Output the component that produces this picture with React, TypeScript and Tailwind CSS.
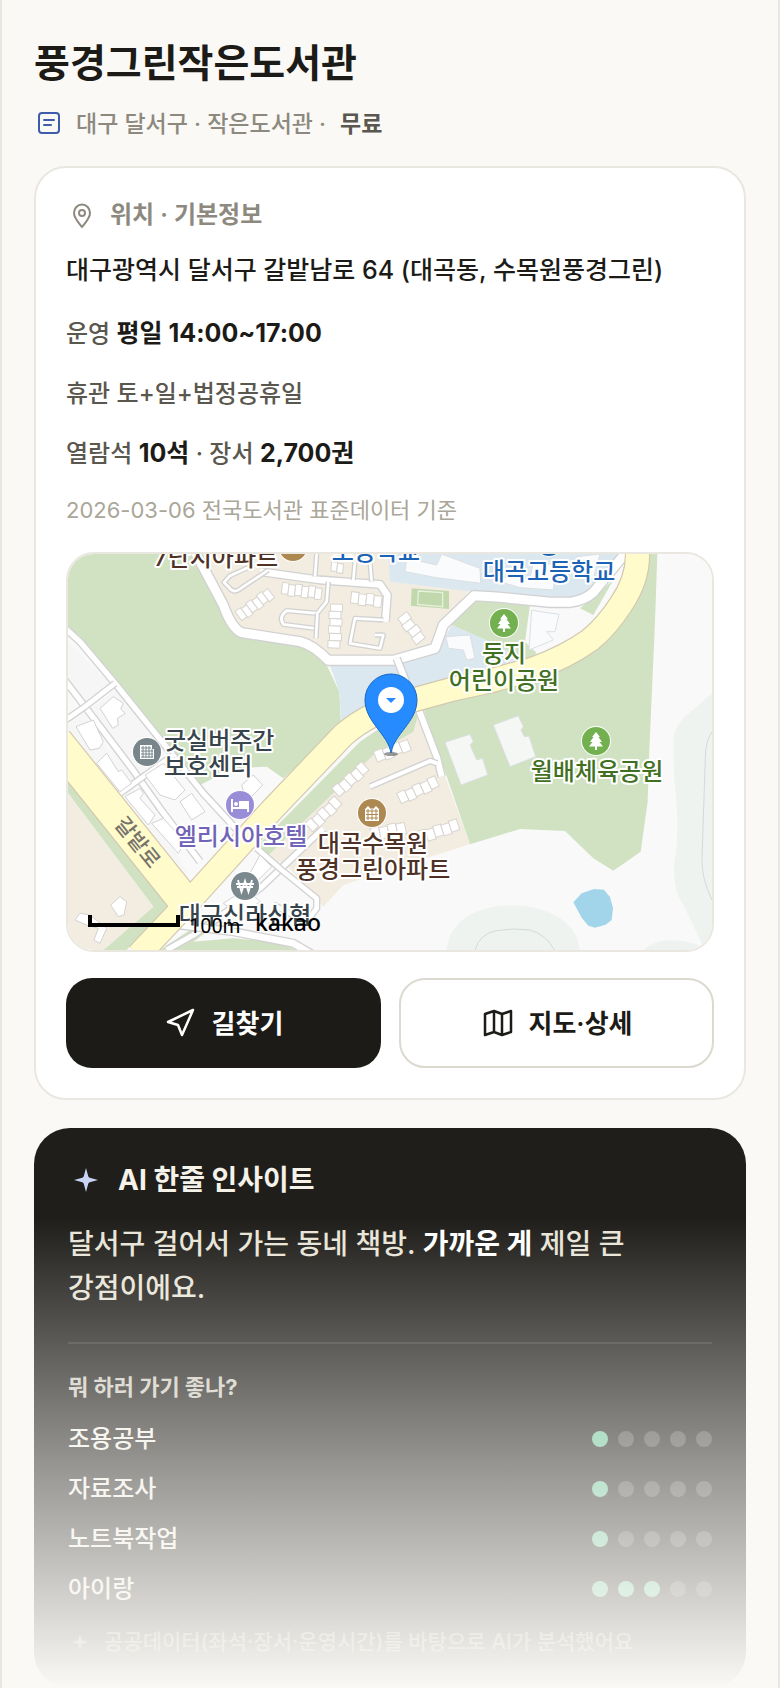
import type { ReactNode } from "react";
import { clsx } from "clsx";

const ROAD = "#d2d2d2";

/** White street with a thin grey casing. */
function Street({ d, width = 12 }: { d: string; width?: number }) {
  return (
    <g fill="none" strokeLinejoin="round">
      <path d={d} stroke={ROAD} strokeWidth={width + 8} />
      <path d={d} stroke="#fff" strokeWidth={width} />
    </g>
  );
}

/** Row of joined apartment units, drawn from its first corner along an angle. */
function Units({ x, y, angle, count, w = 20, h = 34 }: { x: number; y: number; angle: number; count: number; w?: number; h?: number }) {
  return (
    <g transform={`translate(${x} ${y}) rotate(${angle})`} fill="#fff" stroke="#d8d4cf" strokeWidth="3">
      {Array.from({ length: count }, (_, i) => (
        <rect key={i} x={i * w} y={i % 2 ? 4 : 0} width={w} height={h} />
      ))}
    </g>
  );
}

function MapLabel({ x, y, color, anchor = "middle", children }: { x: number; y: number; color: string; anchor?: "middle" | "start"; children: ReactNode }) {
  return (
    <text x={x} y={y} fill={color} textAnchor={anchor} stroke="#fff" strokeWidth="4" strokeLinejoin="round" paintOrder="stroke">
      {children}
    </text>
  );
}

function Poi({ x, y, color, children }: { x: number; y: number; color: string; children?: ReactNode }) {
  return (
    <g transform={`translate(${x} ${y})`}>
      <circle r="15" fill="#fff" />
      <circle r="14" fill={color} />
      {children}
    </g>
  );
}

function Tree() {
  return <path d="M0-9 4-4H2.500L6 1H3.500L7 5.500H1V9H-1V5.500H-7L-3.500 1H-6L-2.500-4H-4Z" fill="#fff" />;
}

function Building() {
  return (
    <g>
      <path d="M-7-7H5V-3H7V7H-7Z" fill="#fff" />
      <path d="M-6-4H4M-6-1H6M-6 2H6M-6 5H6M-4-6V6M-1-6V6M2-6V6M5-3V6" stroke="#78868c" />
    </g>
  );
}

function Apartment() {
  return (
    <g>
      <path d="M-7 8V-4L-4-7-1-4 0-5 1-4 4-7 7-4V8Z" fill="#fff" />
      <path d="M-6-2H6M-6 1.500H6M-6 5H6M-4-4V7M0-4V7M4-4V7" stroke="#ad8850" />
    </g>
  );
}

function LocationMap() {
  return (
    <svg viewBox="0 0 644 396" preserveAspectRatio="xMidYMid slice" className="block size-full" role="img" aria-label="풍경그린작은도서관 위치 지도">
      <rect width="644" height="396" fill="#f9f9f9" />
      <g transform="translate(-8 -9) scale(0.33333)">
        {/* ground */}
        <path d="M24 27H410L490 200 530 260 720 295 800 360 838 440 843 540 760 620 670 700 620 665 520 670 420 720 300 590 160 400 24 245Z" fill="#d0e2c2" />
        <path d="M410 27H990V110L1230 135 1140 240 1110 300 1000 330H800L720 285 530 255 500 220Z" fill="#f3ede1" />
        <path d="M985 27H1700L1600 160H1500L1240 140 990 110Z" fill="#dbe8f0" />
        <path d="M810 362H1000L1130 320 1175 240 1290 290 1430 320 1300 370 1060 440 915 500 845 540 838 440Z" fill="#dbe8f0" />
        <path d="M1175 240 1240 165 1410 180 1395 290 1430 325 1400 345 1290 290Z" fill="#d0e2c2" />
        <path d="M1560 190 1660 105 1600 210Z" fill="#d0e2c2" />
        <path d="M1090 490 1200 450 1480 375 1560 335 1640 260 1710 170 1760 60 1770 27H1792L1785 230 1768 615 1763 770 1742 920 1660 977 1600 940 1515 858 1380 852 1230 898Z" fill="#d0e2c2" />
        <path d="M1060 480 1085 545 940 640 620 945 585 910 900 590Z" fill="#d0e2c2" />
        <path d="M1080 490 1230 898 1110 935 850 1020 790 1085 680 960 620 935 940 630 1060 560Z" fill="#f3ede1" />
        <path d="M24 700 325 1085 200 1215H130L280 1085 24 745Z" fill="#d0e2c2" />
        <path d="M24 745 280 1085 130 1215H24Z" fill="#f3ede1" />
        <path d="M300 1215 390 1155 480 1130 400 1190 520 1180 640 1190 710 1215Z" fill="#d0e2c2" />

        {/* contours and pond */}
        <path d="M1956 445 1870 520Q1840 550 1840 590L1842 700Q1862 850 1842 960 1840 1040 1870 1080L1928 1200 1956 1215Z" fill="#eef3f0" />
        <path d="M1160 1215C1170 1120 1260 1082 1355 1081 1460 1082 1555 1130 1559 1215ZM1750 1215Q1810 1160 1930 1205V1215Z" fill="#eef3f0" />
        <path d="M1956 560Q1936 590 1936 640L1926 940Q1924 1000 1956 1065M1245 1215Q1260 1165 1310 1157 1360 1148 1410 1155 1460 1170 1483 1215" fill="none" stroke="#d3dad5" strokeWidth="3" />
        <path d="M1540 1072 1565 1045 1602 1032 1632 1034 1650 1056 1659 1090 1655 1125 1637 1139 1605 1148 1585 1142 1565 1118Z" fill="#a3d5ea" />

        {/* residential blocks on the west side */}
        <path d="M24 290 150 415 75 470 24 420ZM95 490 165 435 320 620 200 720ZM24 540 70 505 350 925 390 1000 24 600Z" fill="#f6f6f7" />
        <Street d="M10 245 60 290 165 415 330 620 430 745 545 870" width={16} />
        <Street d="M10 400 75 485 215 670 300 790 420 950" width={16} />
        <Street d="M10 530 75 485 165 415" width={14} />
        <Street d="M180 745 340 630" width={14} />
        <g fill="#fff" stroke="#d2d2d2" strokeWidth="3">
          <path d="M120 490 160 455 190 475 182 492 196 505 172 520 175 540 158 550Z" />
          <path d="M48 545 100 525 130 590 118 610 90 615Z" />
          <path d="M110 655 140 625 175 680 185 675 215 715 180 740Z" />
          <path d="M255 690 310 655 375 735 345 765 300 750Z" />
          <path d="M360 770 395 745 435 800 395 825Z" />
          <path d="M195 755 240 730 250 745 240 760 285 810 265 840Z" />
          <path d="M275 835 310 820 375 890 355 925Z" />
          <path d="M545 720 580 690 608 720 560 770Z" />
          <path d="M152 1080 180 1055 200 1070 192 1110 175 1115Z" />
          <path d="M45 1125 60 1105 90 1110 140 1150 120 1195 102 1185 115 1150 80 1140Z" />
        </g>

        {/* apartment complex streets */}
        <Street d="M600 80 780 105 960 118 982 150 976 230" width={20} />
        <Street d="M770 27 765 95M885 50 880 105M930 50 935 110" width={8} />
        <Street d="M625 75 535 135Q520 145 505 125L492 112 510 92 570 65" width={8} />
        <Street d="M805 110 800 170 772 205 680 197Q655 215 670 238L765 250" width={8} />
        <Street d="M772 205 768 280M970 225 885 220 870 295 960 310 970 270 945 270" width={8} />
        <Units x={525} y={200} angle={-37} count={6} />
        <Units x={668} y={112} angle={7} count={6} />
        <Units x={875} y={140} angle={6} count={4} w={23} />
        <Units x={848} y={178} angle={92} count={6} w={22} h={36} />
        <Units x={1040} y={200} angle={52} count={4} w={24} />
        <Units x={815} y={50} angle={5} count={2} w={18} h={28} />
        <path d="M1055 130 1167 138V192L1053 182Z" fill="#c1d8ac" />
        <path d="M1075 138 1148 143V185L1073 178Z" fill="none" stroke="#e6f0dc" strokeWidth="4" />
        <g fill="#fafbfc" stroke="#dcdfe2" strokeWidth="3">
          <path d="M1040 40 1130 60 1145 27 1260 70 1262 115 1130 98 1035 80Z" />
          <path d="M1270 95 1410 100 1420 50 1490 60 1480 135 1380 128Z" />
          <path d="M1550 35 1620 27 1600 100 1560 105Z" />
          <path d="M1158 275 1230 270 1245 340 1220 345 1210 315 1165 310Z" />
          <path d="M1415 195 1440 200 1497 208 1485 260 1460 260 1480 285 1407 315Z" />
          <path d="M1300 540 1375 512 1390 545 1383 555 1393 575 1407 573 1427 635 1350 665Z" fill="#f4f7f3" />
          <path d="M1155 592 1230 568 1240 590 1230 600 1250 645 1268 640 1283 690 1203 720Z" fill="#f4f7f3" />
        </g>

        <Street d="M405 20 490 180Q515 250 545 263L720 290Q760 300 805 346H1000L1125 310 1150 240 1242 152 1310 156 1470 172H1530Q1575 165 1600 142L1700 20" width={27} />
        <Street d="M1010 340 1050 440M1075 490 1132 640 1145 695" width={18} />
        <Street d="M930 725 1110 648 1132 655" width={12} />
        <Street d="M790 850 600 1030 400 1170 320 1215" width={16} />
        <Street d="M590 910 665 975 770 1060 770 1090 740 1130 640 1080" width={14} />
        <Street d="M360 1140 520 1160 700 1195 760 1230" width={20} />
        <Units x={735} y={835} angle={-43} count={5} w={24} />
        <Units x={815} y={730} angle={-42} count={5} w={24} />
        <Units x={1010} y={745} angle={-25} count={5} w={25} />
        <Units x={1070} y={860} angle={-18} count={5} w={25} />
        <Units x={940} y={620} angle={-22} count={4} w={27} />
        <Units x={930} y={850} angle={-12} count={4} w={26} />
        <path d="M570 985 600 930 635 965 590 1010ZM490 1075 560 1030 600 1070 540 1110Z" fill="#fff" stroke="#d2d2d2" strokeWidth="3" />

        {/* main roads */}
        <g fill="none" strokeLinejoin="round">
          <path d="M1732 15 Q1738 95 1685 175 1640 245 1590 285 1520 335 1420 372L1290 408 1180 432 1060 465Q930 500 850 570L640 790 400 1055 235 1230" stroke="#d3c8b0" strokeWidth="76" />
          <path d="M-10 590 375 1070" stroke="#d3c8b0" strokeWidth="102" />
          <path d="M1732 15 Q1738 95 1685 175 1640 245 1590 285 1520 335 1420 372L1290 408 1180 432 1060 465Q930 500 850 570L640 790 400 1055 235 1230" stroke="#fffbca" strokeWidth="69" />
          <path d="M-10 590 375 1070" stroke="#fffbca" strokeWidth="95" />
        </g>
      </g>

      <g fontSize="24" fontWeight="500">
        <Poi x={225} y={-7} color="#ad8850" />
        <Poi x={481} y={-12} color="#1c62b5" />
        <MapLabel x={148} y={12} color="#4f3226">7단지아파트</MapLabel>
        <MapLabel x={308} y={6} color="#1c62b5">초등학교</MapLabel>
        <MapLabel x={481} y={26} color="#1c62b5">대곡고등학교</MapLabel>
        <MapLabel x={436} y={108} color="#417022">둥지</MapLabel>
        <MapLabel x={436} y={135} color="#417022">어린이공원</MapLabel>
        <MapLabel x={529} y={226} color="#417022">월배체육공원</MapLabel>
        <MapLabel x={96} y={195} color="#37444b" anchor="start">굿실버주간</MapLabel>
        <MapLabel x={96} y={221} color="#37444b" anchor="start">보호센터</MapLabel>
        <MapLabel x={173} y={291} color="#7163b8">엘리시아호텔</MapLabel>
        <MapLabel x={305} y={298} color="#4f3226">대곡수목원</MapLabel>
        <MapLabel x={305} y={324} color="#4f3226">풍경그린아파트</MapLabel>
        <MapLabel x={177} y={370} color="#37444b">대구신라신협</MapLabel>
      </g>
      <text transform="translate(64 293) rotate(51)" textAnchor="middle" fontSize="21" fontWeight="500" fill="#77726a">갈밭로</text>

      <Poi x={436} y={69} color="#73b04f"><Tree /></Poi>
      <Poi x={528} y={187} color="#73b04f"><Tree /></Poi>
      <Poi x={79} y={198} color="#78868c"><Building /></Poi>
      <Poi x={304} y={259} color="#ad8850"><Apartment /></Poi>
      <Poi x={172} y={251} color="#9a8dd8">
        <path d="M-8-6V7M-8 3H8M8 7V-3H0V2" fill="none" stroke="#fff" strokeWidth="2" />
        <path d="M0-3H6Q8-3 8-1V3H0Z" fill="#fff" />
        <circle cx="-4" cy="-1" r="2" fill="#fff" />
      </Poi>
      <Poi x={177} y={332} color="#7b898f">
        <path d="M-7-6-3.500 6 0-5 3.500 6 7-6M-9-2H9M-8 1H8" fill="none" stroke="#fff" strokeWidth="1.800" />
      </Poi>

      {/* library marker */}
      <ellipse cx="323" cy="200" rx="7" ry="2" fill="#555" opacity="0.6" />
      <path d="M323 199C320 180 297 168 297 146A26 26 0 0 1 349 146C349 168 326 180 323 199Z" fill="#258bff" stroke="#1768c8" />
      <circle cx="323" cy="146" r="13" fill="#fff" />
      <path d="M318 144H328L323 149Z" fill="#258bff" />

      <path d="M22 361V371H110V361" fill="none" stroke="#000" strokeWidth="4" />
      <text x="121" y="379" fontSize="20" fontWeight="400" fontFamily="Roboto, sans-serif">100m</text>
      <text x="187" y="377" fontSize="23" fontWeight="500" fontFamily="'Noto Sans', sans-serif">kakao</text>
    </svg>
  );
}

function Sparkle({ className }: { className?: string }) {
  return (
    <svg viewBox="0 0 24 24" fill="currentColor" className={className} aria-hidden="true">
      <path d="M12 4 13.500 9.500Q13.800 10.300 14.500 10.500L20 12 14.500 13.500Q13.800 13.700 13.500 14.500L12 20 10.500 14.500Q10.200 13.700 9.500 13.500L4 12 9.500 10.500Q10.200 10.300 10.500 9.500Z" />
    </svg>
  );
}

const scores = [
  { label: "조용공부", value: 1 },
  { label: "자료조사", value: 1 },
  { label: "노트북작업", value: 1 },
  { label: "아이랑", value: 3 },
];

function ScoreRow({ label, value }: { label: string; value: number }) {
  return (
    <li className="flex h-[50px] items-center justify-between">
      <span className="text-[24px] font-medium">{label}</span>
      <span className="flex gap-2.5" role="img" aria-label={`5점 중 ${value}점`}>
        {[1, 2, 3, 4, 5].map((n) => (
          <span key={n} className={clsx("size-4 rounded-full", n <= value ? "bg-[#6fc79b]" : "bg-white/20")} />
        ))}
      </span>
    </li>
  );
}

export default function App() {
  return (
    <main className="relative min-h-screen overflow-hidden border-x-2 border-[#e9e7e0] bg-[#faf9f5] px-8 pt-[38px] font-[Inter,'Noto_Sans_CJK_KR',sans-serif] font-medium break-keep text-[#1c1b17]">
      <h1 className="text-[39px] leading-[50px] font-bold">풍경그린작은도서관</h1>
      <p className="mt-5 flex items-center text-[23px] leading-8 text-[#8d897e]">
        <svg viewBox="0 0 30 30" className="mr-3 size-[30px]" fill="none" stroke="#3f5bab" strokeWidth="2" strokeLinecap="round" aria-hidden="true">
          <rect x="5" y="4" width="20" height="20" rx="3" />
          <path d="M10 11H20M10 16H17" />
        </svg>
        대구 달서구 · 작은도서관 ·
        <strong className="ml-3.5 font-semibold text-[#5a574e]">무료</strong>
      </p>

      <section className="mt-[26px] rounded-[32px] border-2 border-[#e9e7e0] bg-white p-[30px]">
        <h2 className="flex items-center gap-3 text-[24px] leading-[34px] font-semibold text-[#8d897e]">
          <svg viewBox="0 0 32 32" className="size-8" fill="none" stroke="currentColor" strokeWidth="2" aria-hidden="true">
            <path d="M16 28C12 23 8 19 8 14A8 8.500 0 0 1 24 14C24 19 20 23 16 28Z" strokeLinejoin="round" />
            <circle cx="16" cy="14" r="3" />
          </svg>
          위치 · 기본정보
        </h2>
        <p className="mt-[22px] text-[25px] leading-8">대구광역시 달서구 갈밭남로 64 (대곡동, 수목원풍경그린)</p>
        <div className="mt-8 space-y-7 text-[24px] leading-8 text-[#5a574e]">
          <p>운영 <strong className="text-[25px] leading-none font-bold text-[#1c1b17]">평일 14:00~17:00</strong></p>
          <p>휴관 토+일+법정공휴일</p>
          <p>
            열람석 <strong className="text-[25px] leading-none font-bold text-[#1c1b17]">10석</strong> · 장서{" "}
            <strong className="text-[25px] leading-none font-bold text-[#1c1b17]">2,700권</strong>
          </p>
        </div>
        <p className="mt-6 text-[22px] leading-8 font-normal text-[#aaa698]">2026-03-06 전국도서관 표준데이터 기준</p>

        <div className="mt-[26px] h-[400px] overflow-hidden rounded-[28px] border-2 border-[#e9e7e0]">
          <LocationMap />
        </div>

        <div className="mt-[26px] grid grid-cols-2 gap-[18px] text-[26px] font-semibold">
          <button type="button" className="flex h-[90px] items-center justify-center gap-3.5 rounded-[26px] bg-[#1c1b17] text-white">
            <svg viewBox="0 0 34 34" className="size-[34px]" fill="none" stroke="currentColor" strokeWidth="2.500" strokeLinejoin="round" aria-hidden="true">
              <path d="M29 4 4 16 14 19 18 29Z" />
            </svg>
            길찾기
          </button>
          <button type="button" className="flex h-[90px] items-center justify-center gap-3.5 rounded-[26px] border-2 border-[#dcd9d0] bg-white">
            <svg viewBox="0 0 34 34" className="size-[34px]" fill="none" stroke="currentColor" strokeWidth="2.500" strokeLinejoin="round" aria-hidden="true">
              <path d="M4 8 13 5 21 8 30 5V26L21 29 13 26 4 29ZM13 5V26M21 8V29" />
            </svg>
            지도·상세
          </button>
        </div>
      </section>

      <section className="mt-7 rounded-[36px] bg-[#1f1e1a] px-[34px] pt-[34px] pb-8 text-[#f5f2ea]">
        <h2 className="flex items-center gap-3.5 text-[28px] leading-9 font-bold">
          <Sparkle className="size-9 text-[#c9d4f5]" />
          AI 한줄 인사이트
        </h2>
        <p className="mt-6 text-[28px] leading-[44px] text-[#e8e4d8]">
          달서구 걸어서 가는 동네 책방. <strong className="font-bold text-white">가까운 게</strong> 제일 큰 강점이에요.
        </p>
        <div className="mt-8 border-t-2 border-white/10 pt-[29px]">
          <h3 className="text-[22px] leading-7 font-bold text-[#d0ccc0]">뭐 하러 가기 좋나?</h3>
          <ul className="mt-[13px]">
            {scores.map((score) => (
              <ScoreRow key={score.label} {...score} />
            ))}
          </ul>
        </div>
        <p className="mt-3.5 flex items-center gap-3 text-[21px] leading-7 text-[#8d897e]">
          <Sparkle className="size-6" />
          공공데이터(좌석·장서·운영시간)를 바탕으로 AI가 분석했어요
        </p>
      </section>

      {/* fade towards the rest of the page */}
      <div className="pointer-events-none absolute inset-x-0 bottom-0 h-[470px] bg-linear-to-b from-[#faf9f5]/0 via-[#faf9f5]/52 to-[#faf9f5]" />
    </main>
  );
}
